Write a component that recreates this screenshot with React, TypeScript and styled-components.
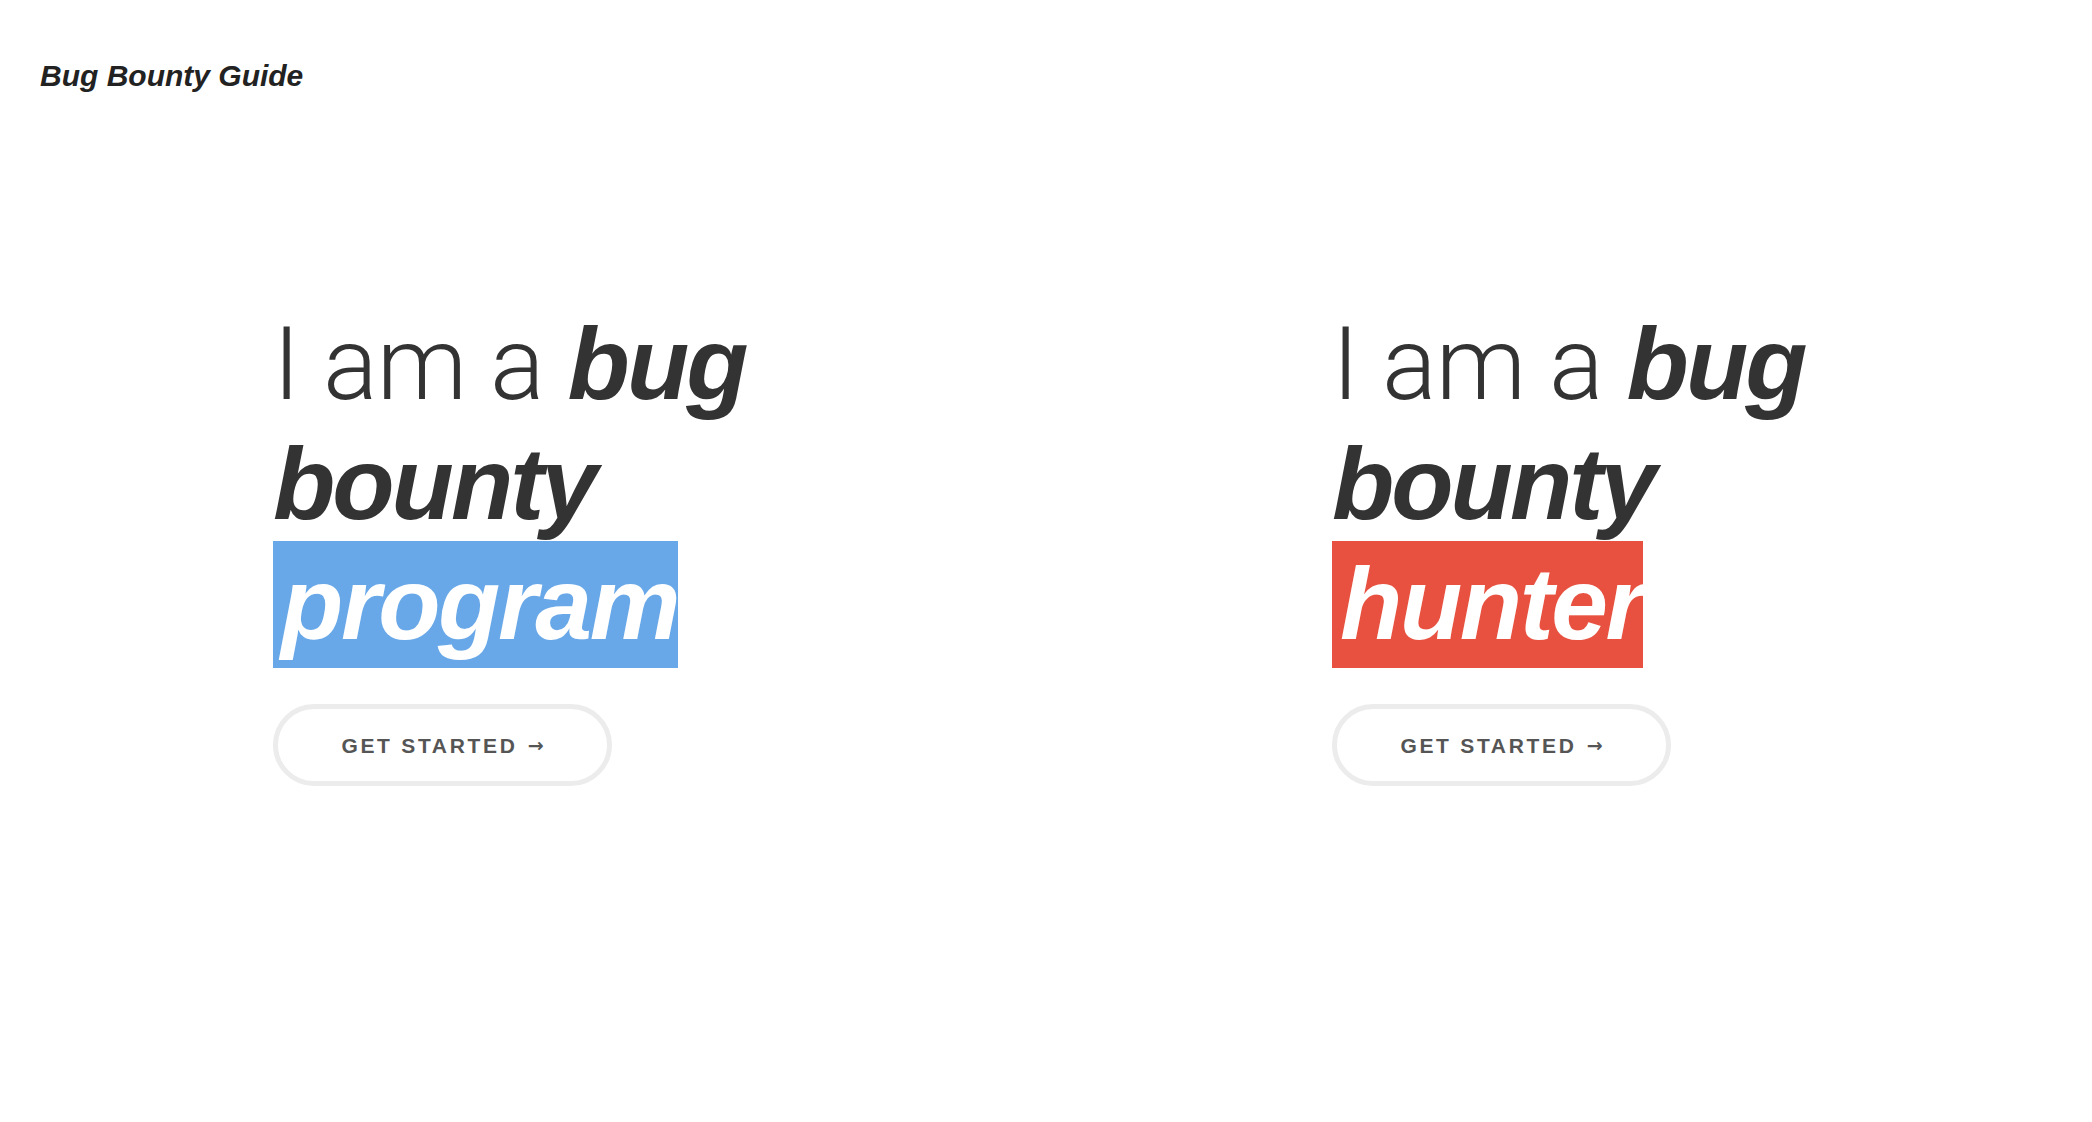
import React from "react";
import styled, { createGlobalStyle } from "styled-components";

const GlobalStyle = createGlobalStyle`
  html, body {
    margin: 0;
    padding: 0;
    background: #ffffff;
  }
  body {
    font-family: "Liberation Sans", Arial, Helvetica, sans-serif;
    color: #333333;
  }
  * { box-sizing: border-box; }
`;

const Page = styled.div`
  width: 100%;
  min-height: 1122px;
  display: flex;
  flex-direction: column;
`;

const Header = styled.header`
  padding: 59px 0 0 40px;
  height: 120px;
`;

const Logo = styled.a`
  font-family: "Liberation Sans", Arial, sans-serif;
  font-size: 30px;
  font-weight: 700;
  font-style: italic;
  color: #222222;
  text-decoration: none;
  letter-spacing: 0;
  line-height: 34px;
`;

const Columns = styled.main`
  display: grid;
  grid-template-columns: 1059px 1fr;
  padding: 184px 0 0 273px;
`;

const Column = styled.section`
  display: flex;
  flex-direction: column;
  align-items: flex-start;
`;

const Title = styled.h1`
  margin: 0;
  font-family: "Liberation Sans", Arial, sans-serif;
  font-size: 102px;
  line-height: 120px;
  font-weight: 700;
  color: #333333;
  width: 520px;
`;

const Light = styled.span`
  font-family: Roboto, "Liberation Sans", sans-serif;
  font-weight: 300;
  letter-spacing: -1px;
`;

const Strong = styled.strong`
  font-weight: 700;
  font-style: italic;
  letter-spacing: -3px;
`;

const Highlight = styled.span<{ $color: string }>`
  background: ${(p) => p.$color};
  color: #ffffff;
  font-weight: 700;
  font-style: italic;
  letter-spacing: -2.4px;
  padding: 6px 0 7px 8px;
`;

const Button = styled.a`
  margin-top: 40px;
  display: inline-flex;
  align-items: center;
  justify-content: center;
  gap: 10px;
  width: 339px;
  height: 82px;
  border: 5px solid #ececec;
  border-radius: 41px;
  font-family: "Liberation Sans", Arial, sans-serif;
  font-size: 21px;
  font-weight: 700;
  letter-spacing: 2.7px;
  color: #555555;
  text-decoration: none;
  padding-top: 2px;
`;

const Arrow = styled.span`
  font-family: "DejaVu Sans", sans-serif;
  font-size: 19px;
  font-weight: 700;
  letter-spacing: 0;
  line-height: 1;
  margin-top: -2px;
`;

const cards = [
  { label: "program", color: "#68a8e8" },
  { label: "hunter", color: "#e8513f" },
];

export default function App() {
  return (
    <Page>
      <GlobalStyle />
      <Header>
        <Logo href="#">Bug Bounty Guide</Logo>
      </Header>
      <Columns>
        {cards.map((c) => (
          <Column key={c.label}>
            <Title>
              <Light>I am a </Light>
              <Strong>bug bounty</Strong>{" "}
              <Highlight $color={c.color}>{c.label}</Highlight>
            </Title>
            <Button href="#">
              GET STARTED
              <Arrow>→</Arrow>
            </Button>
          </Column>
        ))}
      </Columns>
    </Page>
  );
}
